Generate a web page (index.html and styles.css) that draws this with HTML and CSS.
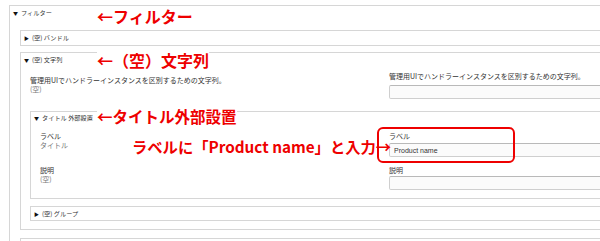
FILE: index.html
```html
<!DOCTYPE html>
<html>
<head>
  <meta charset="UTF-8">
  <title>フィルター</title>
  <link rel="stylesheet" href="styles.css">
</head>
<body>
    <div class="page">

        <div class="box outer">
            <div class="summary top"><span class="tri">▼</span>フィルター</div>

            <div class="box sub bundle">
                <div class="summary"><span class="tri">▶</span>(空) バンドル</div>
            </div>

            <div class="box sub strings">
                <div class="summary"><span class="tri">▼</span>(空) 文字列</div>
                <div class="content">
                    <div class="row first">
                        <div class="left wide">
                            <div class="txt">管理用UIでハンドラーインスタンスを区別するための文字列。</div>
                            <div class="muted">(空)</div>
                        </div>
                        <div class="right">
                            <div class="txt">管理用UIでハンドラーインスタンスを区別するための文字列。</div>
                            <input class="field gap4" type="text" value="">
                        </div>
                    </div>

                    <div class="box title">
                        <div class="summary"><span class="tri">▼</span>タイトル 外部設置</div>
                        <div class="content">
                            <div class="row">
                                <div class="left narrow">
                                    <div class="txt">ラベル</div>
                                    <div class="muted">タイトル</div>
                                </div>
                                <div class="right">
                                    <div class="txt">ラベル</div>
                                    <input class="field gap2" type="text" value="Product name">
                                </div>
                            </div>
                            <div class="row">
                                <div class="left narrow">
                                    <div class="txt">説明</div>
                                    <div class="muted">(空)</div>
                                </div>
                                <div class="right">
                                    <div class="txt">説明</div>
                                    <input class="field gap1" type="text" value="">
                                </div>
                            </div>
                        </div>
                    </div>

                    <div class="box group">
                        <div class="summary"><span class="tri">▶</span>(空) グループ</div>
                    </div>
                </div>
            </div>

            <div class="box sub next"></div>
        </div>

        <!-- annotations -->
        <div class="note n-filter">←フィルター</div>
        <div class="note n-strings">←（空）文字列</div>
        <div class="note n-title">←タイトル外部設置</div>
        <div class="note n-label">ラベルに「Product name」と入力→</div>
        <div class="mark"></div>
    </div>
</body>
</html>
```

FILE: styles.css
```css
body {
    margin: 0;
    background-color: #fff;
    font-family: "Noto Sans CJK JP", "Noto Sans", sans-serif;
    overflow: hidden;
}

.page {
    position: relative;
    width: 600px;
    height: 241px;
    padding: 5px 0 0 9px;
    box-sizing: border-box;
    overflow: hidden;
}

.box {
    border: 1px solid #d6d6d6;
}

.outer {
    width: 700px;
    height: 300px;
}

.summary {
    font-size: 6.2px;
    line-height: 14px;
    color: #333;
    padding-left: 3px;
    white-space: nowrap;
}

.summary.top {
    line-height: 13px;
}

.tri {
    font-size: 5px;
    color: #111;
    margin-right: 3px;
}

.sub {
    margin-left: 10px;
}

.bundle {
    margin-top: 11px;
}

.strings {
    margin-top: 6px;
    padding-bottom: 8px;
}

.content {
    padding-left: 9px;
}

.row {
    display: flex;
    margin-top: 9px;
}

.row.first {
    margin-top: 5px;
}

.left.wide {
    width: 359px;
    padding-top: 3.5px;
}

.left.narrow {
    width: 349px;
}

.right {
    flex: 1;
}

.txt,
.muted {
    font-size: 7px;
    line-height: 9px;
    white-space: nowrap;
}

.txt {
    color: #333;
}

.muted {
    color: #777;
}

.field {
    display: block;
    width: 260px;
    height: 14px;
    box-sizing: border-box;
    margin: 0;
    padding: 0 4px;
    border: 1px solid #cfcfcf;
    border-top-color: #b9b9b9;
    border-radius: 2px;
    background-color: #fbfbfb;
    font-family: "Liberation Sans", sans-serif;
    font-size: 7px;
    color: #333;
}

.gap4 { margin-top: 4px; }
.gap2 { margin-top: 2px; }
.gap1 { margin-top: 1px; }

.title {
    margin-top: 12px;
    padding-bottom: 8px;
}

.title > .summary {
    line-height: 11px;
}

.group {
    margin-top: 7px;
}

.group > .summary {
    line-height: 13px;
}

.next {
    margin-top: 8px;
    height: 30px;
}

/* red notes over the screenshot */
.note {
    position: absolute;
    font-size: 16px;
    font-weight: 700;
    line-height: 18px;
    color: #ee0000;
    background-color: #fff;
    white-space: nowrap;
}

.n-filter { left: 97px; top: 7px; }
.n-strings { left: 97px; top: 51px; }
.n-title { left: 97px; top: 107px; font-size: 15.5px; }
.n-label {
    left: 132px;
    top: 137px;
    font-size: 15.3px;
    background-color: transparent;
}

.mark {
    position: absolute;
    left: 377px;
    top: 127px;
    width: 138px;
    height: 36px;
    box-sizing: border-box;
    border: 2.5px solid #ee0000;
    border-radius: 6px;
}
```
